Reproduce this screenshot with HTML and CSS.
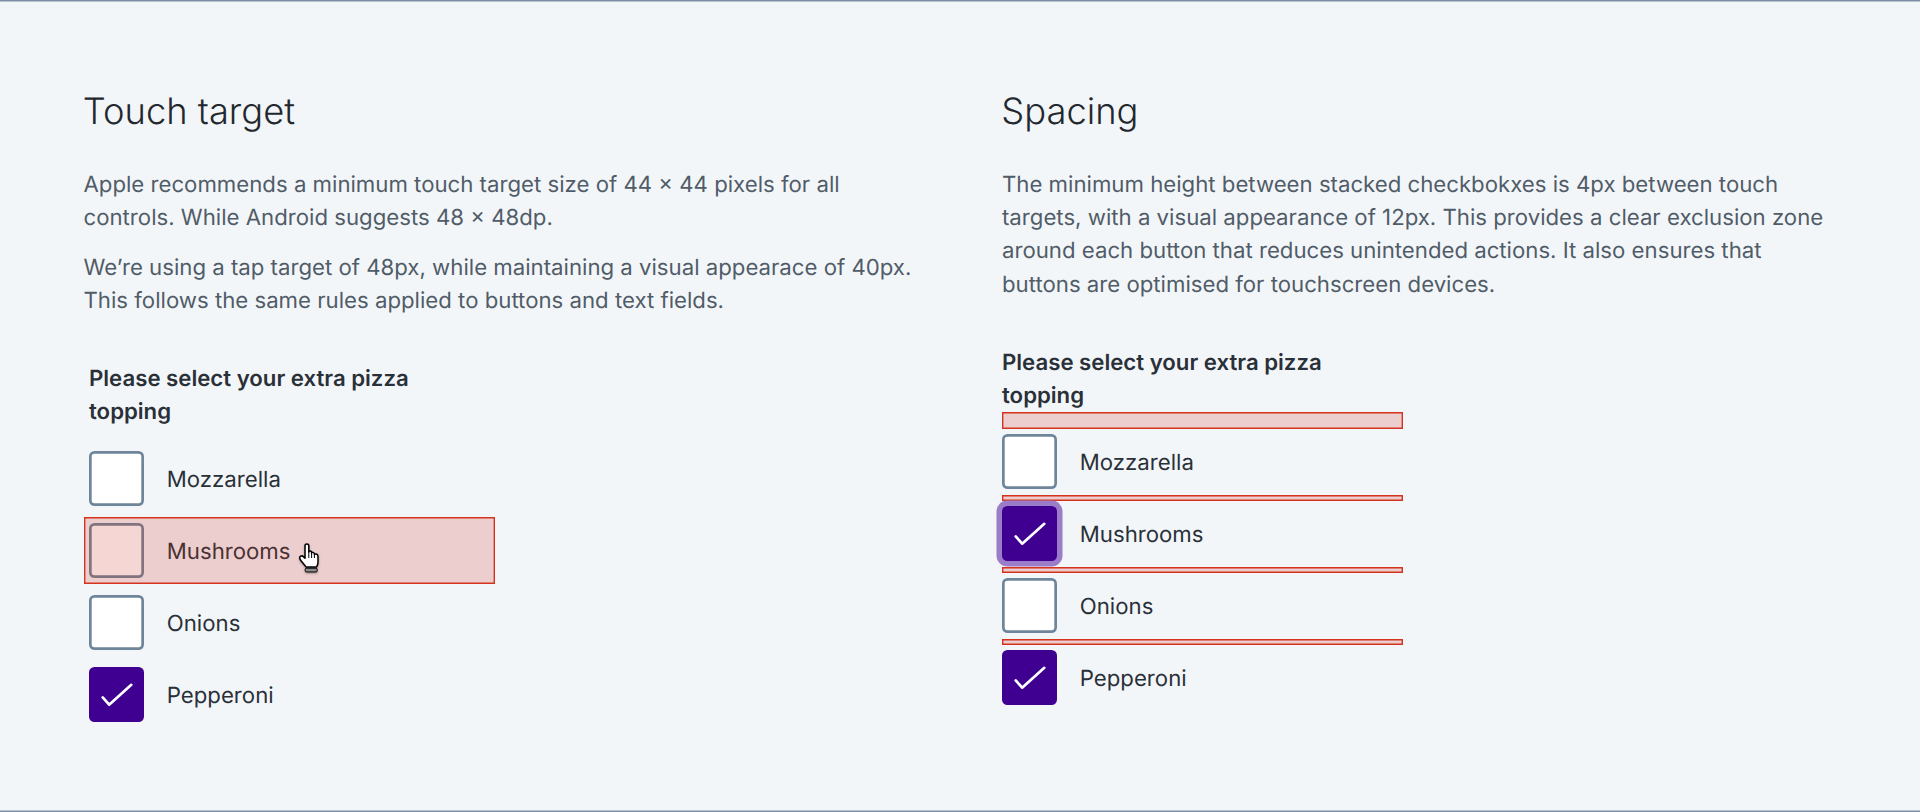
FILE: index.html
```html
<!DOCTYPE html>
<html lang="en">
<head>
<meta charset="utf-8">
<title>Checkbox guidelines</title>
<link rel="stylesheet" href="styles.css">
</head>
<body>
<main class="page">
  <section class="col">
    <h2>Touch target</h2>
    <p>Apple recommends a minimum touch target size of 44 × 44 pixels for all controls. While Android suggests 48 × 48dp.</p>
    <p>We’re using a tap target of 48px, while maintaining a visual appearace of 40px. This follows the same rules applied to buttons and text fields.</p>
    <div class="group group-touch">
      <div class="legend legend-touch">Please select your extra pizza topping</div>
      <div class="rows">
        <label class="row"><span class="box"></span><span class="name">Mozzarella</span></label>
        <label class="row row-hit"><span class="box"></span><span class="name">Mushrooms</span>
          <svg class="cursor" viewBox="0 0 20 30" width="20" height="30" aria-hidden="true">
            <rect x="6.2" y="25.2" width="12" height="3.8" rx="1.2" fill="#8b8b8b" stroke="#000" stroke-width="1"/>
            <path d="M7 24 C6 22 1.5 18 .8 15.5 C.2 13.4 2.6 12 4.4 13.6 L6 15.2 V3 C6 .2 9.8 .2 9.8 3 V9 C10 7.6 12.4 7.6 12.6 9.4 V10.2 C12.8 9 15.2 9 15.4 10.8 V11.6 C15.6 10.6 18.6 10.6 19 13 V19 C19 21 18.4 22.5 17.6 24 Z" fill="#fff" stroke="#000" stroke-width="1.5" stroke-linejoin="round"/>
            <path d="M9.8 9 V15 M12.6 10 V15 M15.4 11.4 V15" fill="none" stroke="#000" stroke-width="1"/>
          </svg>
        </label>
        <label class="row"><span class="box"></span><span class="name">Onions</span></label>
        <label class="row"><span class="box box-on"><svg viewBox="0 0 55 55" aria-hidden="true"><path d="M13.6 30.2 L20 37.4 L42 17.7"/></svg></span><span class="name">Pepperoni</span></label>
      </div>
    </div>
  </section>
  <section class="col">
    <h2>Spacing</h2>
    <p>The minimum height between stacked checkbokxes is 4px between touch targets, with a visual appearance of 12px. This provides a clear exclusion zone around each button that reduces unintended actions. It also ensures that buttons are optimised for touchscreen devices.</p>
    <div class="group group-spacing">
      <div class="legend">Please select your extra pizza topping</div>
      <div class="strip strip-lg"></div>
      <label class="row"><span class="box"></span><span class="name">Mozzarella</span></label>
      <div class="strip"></div>
      <label class="row"><span class="box box-on box-focus"><svg viewBox="0 0 55 55" aria-hidden="true"><path d="M13.6 30.2 L20 37.4 L42 17.7"/></svg></span><span class="name">Mushrooms</span></label>
      <div class="strip"></div>
      <label class="row"><span class="box"></span><span class="name">Onions</span></label>
      <div class="strip"></div>
      <label class="row"><span class="box box-on"><svg viewBox="0 0 55 55" aria-hidden="true"><path d="M13.6 30.2 L20 37.4 L42 17.7"/></svg></span><span class="name">Pepperoni</span></label>
    </div>
  </section>
</main>
</body>
</html>
```
FILE: styles.css
```css
* { box-sizing: border-box; }
html, body { margin: 0; height: 100%; }
body {
  background: #f3f6f9;
  box-shadow: inset 0 1.4px 0 #7c8fa3, inset 0 -1.4px 0 #7c8fa3;
  font-family: Inter, "Liberation Sans", sans-serif;
  text-rendering: geometricPrecision;
  overflow: hidden;
}
.page {
  display: grid;
  grid-template-columns: 834.5px 834px;
  column-gap: 84px;
  padding: 87.5px 83.5px 0;
}
h2 {
  margin: 0 0 33.4px -0.7px;
  font-size: 36.3px;
  line-height: 47px;
  font-weight: 300;
  color: #23282e;
}
p {
  margin: 0 0 16.6px;
  font-size: 22.2px;
  line-height: 33.2px;
  color: #505c68;
}
.group { width: 400.5px; margin-top: 44.8px; }
.group-touch { width: 411.5px; }
.legend {
  font-size: 22.2px;
  line-height: 33.2px;
  font-weight: 600;
  color: #2a3038;
  max-width: 400.5px;
}
.legend-touch { margin-left: 5.5px; margin-bottom: 16.6px; }
.rows { display: flex; flex-direction: column; gap: 5.5px; }
.row {
  position: relative;
  display: flex;
  align-items: center;
  gap: 22.4px;
  height: 66.5px;
}
.group-touch .row { padding-left: 5.5px; }
.box {
  flex: none;
  width: 55.4px;
  height: 55.4px;
  background: #fff;
  box-shadow: inset 0 0 0 2.7px #6f8599;
  border-radius: 5.5px;
}
.box svg { display: block; width: 55.4px; height: 55.4px; }
.box svg path {
  fill: none;
  stroke: #fff;
  stroke-width: 2.7;
  stroke-linecap: round;
  stroke-linejoin: round;
}
.box-on { background: #3f0092; box-shadow: none; }
.box-focus { box-shadow: 0 0 0 5.5px #9a7cc8; }
.name {
  padding-top: 2px;
  font-size: 22.2px;
  line-height: 33.2px;
  color: #2a3038;
}
.row-hit::after {
  content: "";
  position: absolute;
  inset: 0;
  background: rgba(205, 50, 30, 0.2);
  box-shadow: inset 0 0 0 1.4px #d5331f;
}
.cursor {
  position: absolute;
  left: 215.5px;
  top: 25.5px;
  z-index: 1;
  filter: drop-shadow(0 1px 1px rgba(0, 0, 0, 0.3));
}
.strip {
  height: 5.5px;
  background: rgba(205, 50, 30, 0.2);
  box-shadow: inset 0 0 0 1.4px #d5331f;
}
.strip-lg { height: 16.6px; }
```
